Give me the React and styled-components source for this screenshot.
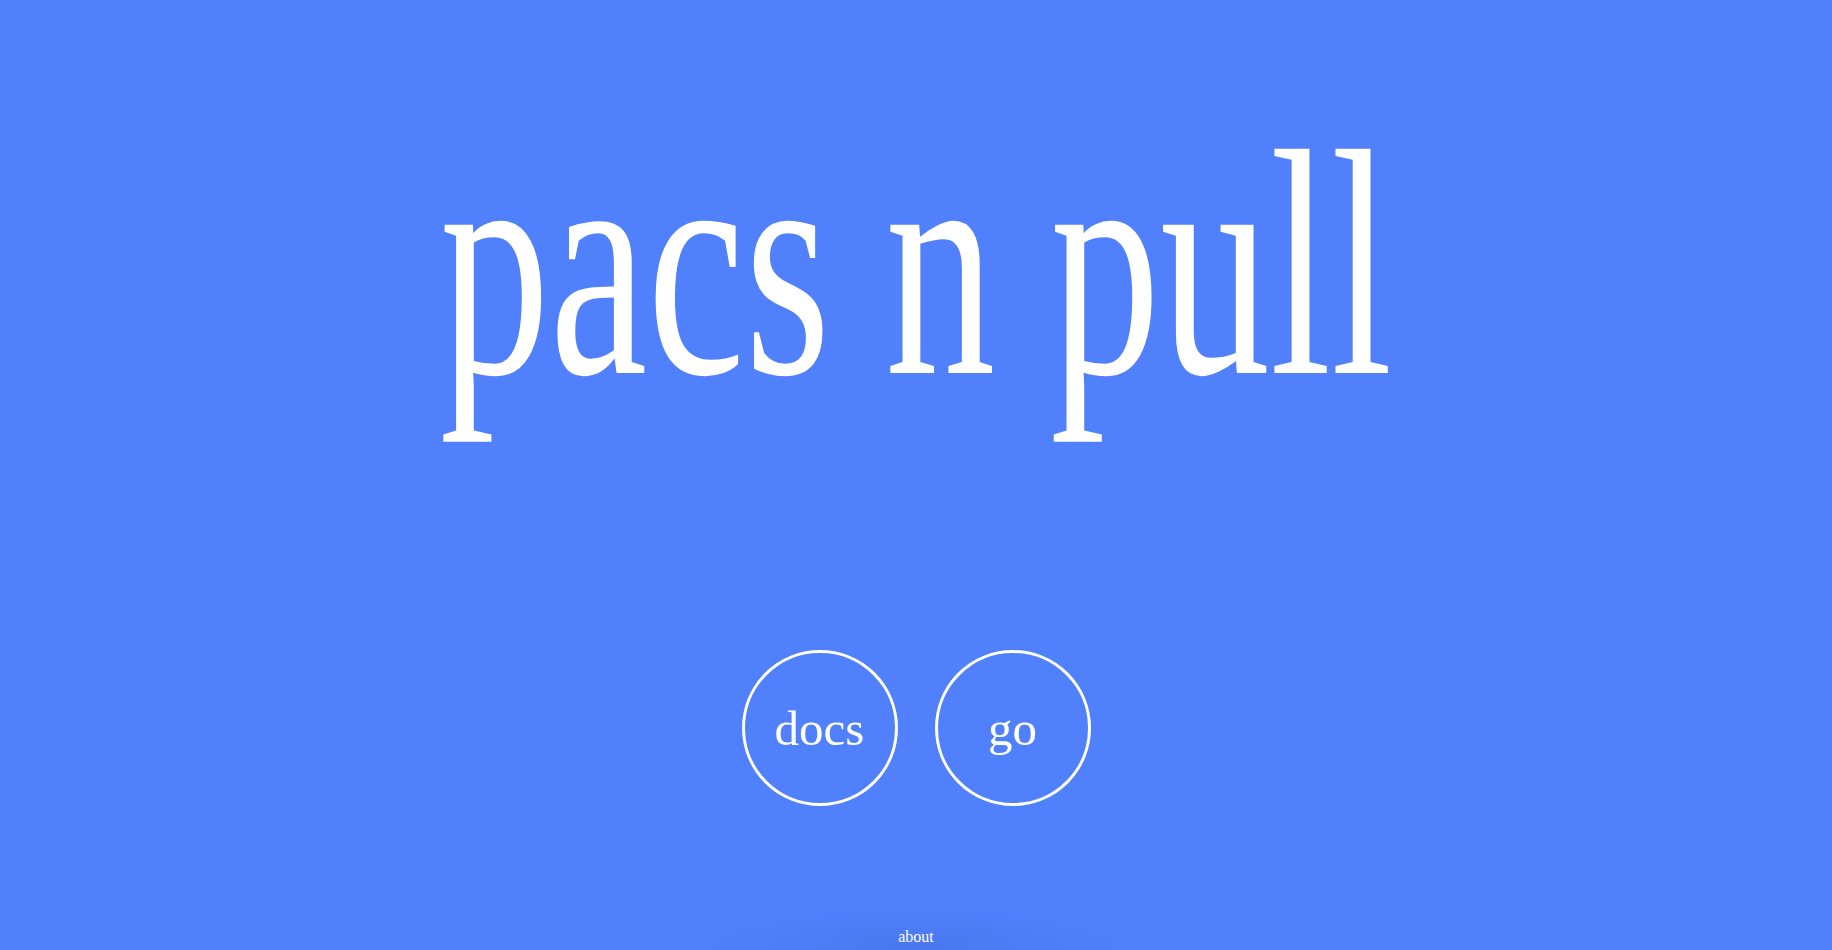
import React from "react";
import styled, { createGlobalStyle } from "styled-components";

const GlobalStyle = createGlobalStyle`
  html, body {
    margin: 0;
    padding: 0;
    background: #5080fc;
    overflow: hidden;
  }
`;

export default function App() {
  return (
    <Page>
      <GlobalStyle />
      <Hero>
        <Title>pacs n pull</Title>
      </Hero>
      <Actions>
        <CircleButton href="#docs">docs</CircleButton>
        <CircleButton href="#go">go</CircleButton>
      </Actions>
      <Footer>
        <AboutLink href="#about">about</AboutLink>
      </Footer>
    </Page>
  );
}

const Page = styled.div`
  height: 100vh;
  display: flex;
  flex-direction: column;
  align-items: center;
  background: #5080fc;
  color: white;
  font-family: "Liberation Serif", "Times New Roman", serif;
`;

const Hero = styled.header`
  width: 100%;
  height: 650px;
  padding-top: 104px;
  box-sizing: border-box;
  display: flex;
  justify-content: center;
`;

const Title = styled.h1`
  margin: 0;
  height: 220px;
  font-size: 12vw;
  font-weight: normal;
  line-height: 1;
  white-space: nowrap;
  transform: scaleY(1.47);
  transform-origin: top center;
`;

const Actions = styled.nav`
  display: flex;
  gap: 37px;
`;

const CircleButton = styled.a`
  width: 156px;
  height: 156px;
  box-sizing: border-box;
  border: 3px solid white;
  border-radius: 50%;
  display: flex;
  align-items: center;
  justify-content: center;
  color: white;
  text-decoration: none;
  font-size: 49px;
`;

const Footer = styled.footer`
  margin-top: auto;
  width: 420px;
  height: 44px;
  padding-bottom: 4px;
  box-sizing: border-box;
  display: flex;
  align-items: flex-end;
  justify-content: center;
  background: radial-gradient(ellipse 50% 100% at 50% 100%, rgba(20, 40, 120, 0.1), rgba(20, 40, 120, 0) 100%);
`;

const AboutLink = styled.a`
  color: white;
  text-decoration: none;
  font-size: 16px;
`;
